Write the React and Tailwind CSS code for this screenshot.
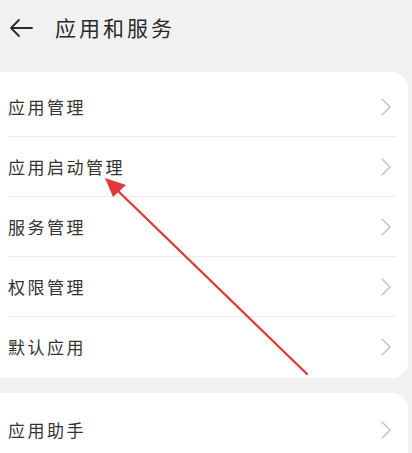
import React from "react";

const items = ["应用管理", "应用启动管理", "服务管理", "权限管理", "默认应用"];

function Chevron() {
  return (
    <svg width="12" height="20" viewBox="0 0 12 20" fill="none">
      <path d="M2 2l8 8-8 8" stroke="#c2c2c2" strokeWidth="1.5" strokeLinecap="round" strokeLinejoin="round" />
    </svg>
  );
}

function Row({ label, last }) {
  return (
    <div className="flex h-[60px] items-center justify-between pl-2 pr-4 relative">
      <span className="text-[17px] text-[#333] tracking-[2.5px]">{label}</span>
      <Chevron />
      {!last && <div className="absolute bottom-0 left-2 right-3 h-px bg-[#ececec]" />}
    </div>
  );
}

export default function App() {
  return (
    <div
      className="relative w-[412px] h-[453px] overflow-hidden bg-[#f1f1f1]"
      style={{ fontFamily: '"Noto Sans CJK SC", "Noto Sans", sans-serif' }}
    >
      {/* Header */}
      <div className="flex h-[72px] items-center gap-[22px] pl-[9px] pb-[16px]">
        <svg width="24" height="20" viewBox="0 0 24 20" fill="none">
          <path d="M23 10H2M10 2L2 10l8 8" stroke="#2a2a2a" strokeWidth="1.8" strokeLinecap="round" strokeLinejoin="round" />
        </svg>
        <span className="text-[21px] text-[#2a2a2a] tracking-[3px]">应用和服务</span>
      </div>

      {/* Card 1 */}
      <div className="w-[408px] bg-white rounded-r-[16px] pt-[5px] pb-[1px]">
        {items.map((t, i) => (
          <Row key={t} label={t} last={i === items.length - 1} />
        ))}
      </div>

      {/* Card 2 */}
      <div className="mt-[15px] w-[408px] bg-white rounded-tr-[16px] pt-[7px]">
        <Row label="应用助手" last />
      </div>

      {/* Red annotation arrow */}
      <svg className="absolute left-0 top-0 pointer-events-none" width="412" height="453" viewBox="0 0 412 453">
        <line x1="307" y1="374" x2="116" y2="189" stroke="#e0393a" strokeWidth="2.4" strokeLinecap="round" />
        <polygon points="105,178 126,185 113,197" fill="#e0393a" />
      </svg>
    </div>
  );
}
